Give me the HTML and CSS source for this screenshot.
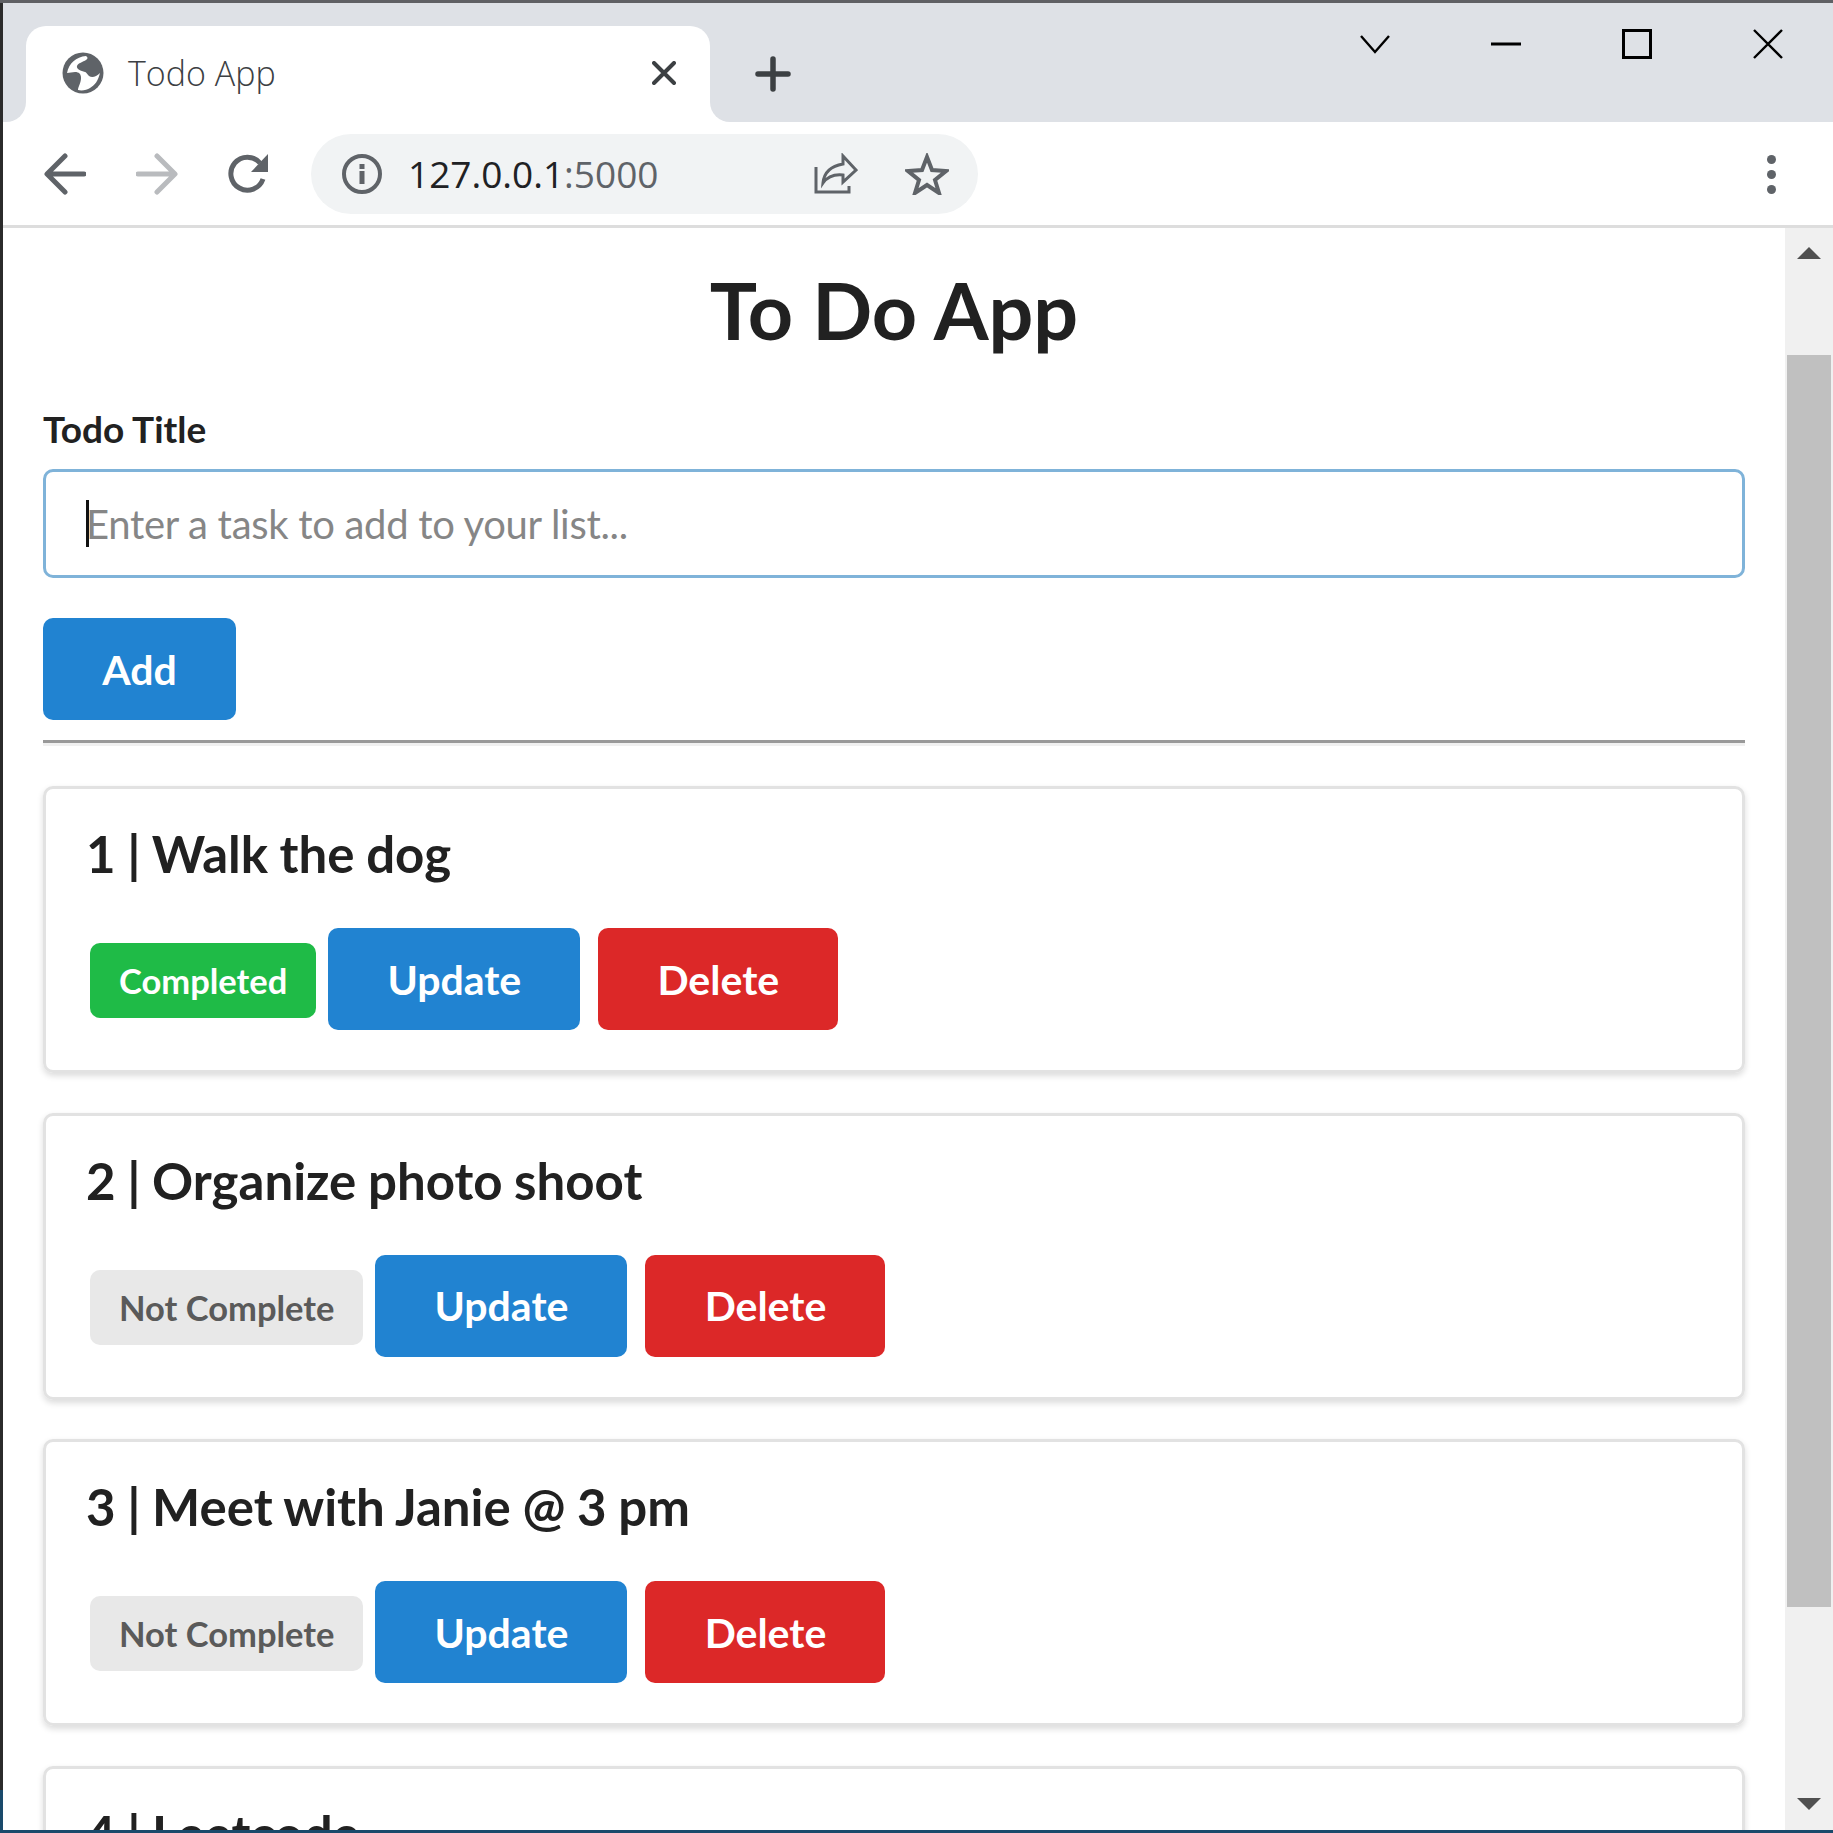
FILE: index.html
```html
<!DOCTYPE html>
<html lang="en">
	<head>
		<meta charset="utf-8">
		<title>Todo App</title>
		<link rel="stylesheet" href="styles.css">
	</head>
	<body>
		<div class="window">
			<div class="tabstrip">
				<div class="strip-start"></div>
				<div class="tab-slot">
					<div class="tab">
						<svg class="globe" width="42" height="42" viewBox="0 0 42 42">
							<circle cx="21" cy="21" r="20.5" fill="#5f6368"/>
							<path d="M24 4C14 5 7 11 5 21l8-1c4 0 6 2 6 6 0 5-3 9-3 12 4 1 9 0 12-2 5-3 8-7 10-15-4 4-8 5-11 3-2-2-3-4-4-4-4-1-9-3-8-6 1-3 6-4 9-6 2-1 2-3 0-4z" fill="#fff"/>
						</svg>
						<span class="tab-title">Todo App</span>
						<svg class="tab-close" width="24" height="24" viewBox="0 0 24 24">
							<path d="M2 2l20 20M22 2L2 22" stroke="#3c4043" stroke-width="4" stroke-linecap="round"/>
						</svg>
					</div>
				</div>
				<div class="strip-rest">
					<svg class="new-tab" width="36" height="36" viewBox="0 0 36 36">
						<path d="M18 3v30M3 18h30" stroke="#3c4043" stroke-width="5.500" stroke-linecap="round"/>
					</svg>
					<div class="window-controls">
						<svg width="30" height="30" viewBox="0 0 30 30">
							<path d="M1 7l14 16L29 7" fill="none" stroke="#000" stroke-width="2.4"/>
						</svg>
						<svg width="30" height="30" viewBox="0 0 30 30">
							<path d="M0 15h30" stroke="#000" stroke-width="3"/>
						</svg>
						<svg width="30" height="30" viewBox="0 0 30 30">
							<rect x="1.500" y="1.500" width="27" height="27" fill="none" stroke="#000" stroke-width="3"/>
						</svg>
						<svg width="30" height="30" viewBox="0 0 30 30">
							<path d="M1 1l28 28M29 1L1 29" stroke="#000" stroke-width="2.4"/>
						</svg>
					</div>
				</div>
			</div>
			<div class="toolbar">
				<svg class="nav-icon" width="42" height="42" viewBox="0 0 42 42">
					<path d="M40 21H4M21 3L3 21l18 18" fill="none" stroke="#5f6368" stroke-width="5" stroke-linecap="round" stroke-linejoin="round"/>
				</svg>
				<svg class="nav-icon nav-forward" width="42" height="42" viewBox="0 0 42 42">
					<path d="M2 21h36M21 3l18 18-18 18" fill="none" stroke="#b9bbbe" stroke-width="5" stroke-linecap="round" stroke-linejoin="round"/>
				</svg>
				<svg class="nav-icon nav-reload" width="42" height="42" viewBox="0 0 42 42">
					<path d="M36 26a16.500 16.500 0 1 1-3-16" fill="none" stroke="#5f6368" stroke-width="5"/>
					<path d="M41 1v18H24z" fill="#5f6368"/>
				</svg>
				<div class="omnibox">
					<svg class="info" width="40" height="40" viewBox="0 0 40 40">
						<circle cx="20" cy="20" r="18" fill="none" stroke="#5f6368" stroke-width="4"/>
						<path d="M17.500 10h5v5h-5zM17.500 17h5v13h-5z" fill="#5f6368"/>
					</svg>
					<span class="url">127.0.0.1<span class="url-port">:5000</span></span>
					<svg class="share" width="44" height="42" viewBox="0 0 44 42">
						<path d="M2 14v25h33v-6" fill="none" stroke="#5f6368" stroke-width="3"/>
						<path d="M29 3l13 14-13 12v-7c-9-1-15 1-20 8 1-10 8-17 20-19z" fill="none" stroke="#5f6368" stroke-width="3"/>
					</svg>
					<svg class="star" width="44" height="42" viewBox="0 0 44 42">
						<path d="M22 4l5 13 14 1-11 9 4 13-12-8-12 8 4-13L3 18l14-1z" fill="none" stroke="#5f6368" stroke-width="4"/>
					</svg>
				</div>
				<div class="menu-dots"><i></i><i></i><i></i></div>
			</div>
			<div class="viewport">
				<main class="page">
					<h1 class="page-title">To Do App</h1>
					<label class="field-label" for="title">Todo Title</label>
					<div class="field">
						<input class="field-input" id="title" type="text" placeholder="Enter a task to add to your list...">
						<span class="caret"></span>
					</div>
					<button class="btn btn-add">Add</button>
					<hr class="divider">

					<section class="card">
						<h2 class="card-title">1 | Walk the dog</h2>
						<div class="card-actions">
							<span class="badge badge-done">Completed</span>
							<button class="btn btn-update">Update</button>
							<button class="btn btn-delete">Delete</button>
						</div>
					</section>
					<section class="card">
						<h2 class="card-title">2 | Organize photo shoot</h2>
						<div class="card-actions">
							<span class="badge badge-open">Not Complete</span>
							<button class="btn btn-update">Update</button>
							<button class="btn btn-delete">Delete</button>
						</div>
					</section>
					<section class="card">
						<h2 class="card-title">3 | Meet with Janie @ 3 pm</h2>
						<div class="card-actions">
							<span class="badge badge-open">Not Complete</span>
							<button class="btn btn-update">Update</button>
							<button class="btn btn-delete">Delete</button>
						</div>
					</section>
					<section class="card">
						<h2 class="card-title">4 | Leetcode</h2>
					</section>
				</main>
				<div class="scrollbar">
					<span class="arrow-up"></span>
					<div class="thumb"></div>
					<span class="arrow-down"></span>
				</div>
			</div>
		</div>
	</body>
</html>
```

FILE: styles.css
```css
html, body {
	margin: 0;
	height: 100%;
	background: #fff;
}

.window {
	box-sizing: border-box;
	height: 1833px;
	display: flex;
	flex-direction: column;
	overflow: hidden;
	padding-left: 3px;
	border-top: 3px solid #5f6064;
	border-bottom: 3px solid #1a4a6b;
	background: linear-gradient(#2b2b2b 1787px, #1a4a6b 1787px) left top / 3px 100% no-repeat, #fff;
}

/* browser chrome */
.tabstrip {
	display: flex;
	height: 119px;
	flex: none;
}

.strip-start {
	width: 23px;
	background: #dee1e6;
	border-bottom-right-radius: 20px;
}

.tab-slot {
	width: 684px;
	padding-top: 23px;
	box-sizing: border-box;
	background: #dee1e6;
}

.tab {
	height: 96px;
	display: flex;
	align-items: center;
	background: #fff;
	border-radius: 20px 20px 0 0;
	padding: 0 22px 0 36px;
	box-sizing: border-box;
}

.globe {
	margin-right: 24px;
	margin-top: -2px;
}

.tab-title {
	flex: 1;
	font-family: "Open Sans", sans-serif;
	font-size: 34px;
	font-weight: 300;
	color: #3c4043;
	margin-top: -2px;
}

.tab-close {
	margin-top: -2px;
	margin-right: 12px;
}

.strip-rest {
	flex: 1;
	display: flex;
	background: #dee1e6;
	border-bottom-left-radius: 20px;
}

.new-tab {
	margin: 53px 0 0 45px;
}

.window-controls {
	margin-left: auto;
	margin-right: 50px;
	margin-top: 26px;
	display: flex;
	gap: 101px;
	align-items: flex-start;
}

.toolbar {
	height: 103px;
	flex: none;
	display: flex;
	align-items: center;
	padding: 0 0 0 41px;
	border-bottom: 3px solid #dddddd;
}

.nav-icon {
	margin-right: 50px;
}

.nav-forward {
	margin-right: 49px;
}

.nav-reload {
	margin-right: 42px;
}

.omnibox {
	width: 667px;
	height: 80px;
	flex: none;
	display: flex;
	align-items: center;
	box-sizing: border-box;
	padding-left: 31px;
	background: #f1f3f4;
	border-radius: 40px;
}

.url {
	flex: 1;
	margin-left: 26px;
	font-family: "Open Sans", sans-serif;
	font-size: 37px;
	color: #202124;
}

.url-port {
	color: #5f6368;
}

.share {
	margin-right: 47px;
}

.star {
	margin-right: 29px;
}

.menu-dots {
	margin-left: auto;
	margin-right: 57px;
	display: flex;
	flex-direction: column;
	gap: 6px;
	margin-top: 2px;
}

.menu-dots i {
	width: 9px;
	height: 9px;
	border-radius: 50%;
	background: #5f6368;
}

/* page */
.viewport {
	flex: 1;
	min-height: 0;
	display: flex;
}

.page {
	flex: 1;
	min-width: 0;
	overflow: hidden;
	padding: 0 40px;
	font-family: "Lato", sans-serif;
	color: #212121;
}

.page-title {
	margin: 42px 0 0;
	text-align: center;
	font-size: 79px;
	line-height: 80px;
	font-weight: 700;
}

.field-label {
	display: block;
	margin-top: 57px;
	font-size: 37px;
	line-height: 44px;
	font-weight: 700;
}

.field {
	position: relative;
	margin-top: 18px;
}

.field-input {
	display: block;
	width: 100%;
	height: 109px;
	box-sizing: border-box;
	padding: 0 40px;
	border: 3px solid #7fb3d9;
	border-radius: 10px;
	outline: none;
	font-family: "Lato", sans-serif;
	font-size: 40px;
	letter-spacing: -0.3px;
}

.field-input::placeholder {
	color: #868686;
}

.caret {
	position: absolute;
	left: 43px;
	top: 31px;
	width: 3px;
	height: 47px;
	background: #111;
}

.btn {
	height: 102px;
	padding: 0;
	border: none;
	border-radius: 10px;
	color: #fff;
	font-family: "Lato", sans-serif;
	font-size: 41px;
	font-weight: 700;
}

.btn-add {
	display: block;
	width: 193px;
	margin-top: 40px;
	background: #2183d1;
}

.divider {
	margin: 20px 0 40px;
	border: none;
	border-top: 3px solid #999;
	border-bottom: 3px solid #f0f0f0;
}

.card {
	box-sizing: border-box;
	height: 287px;
	margin-bottom: 39.5px;
	padding: 34px 40px;
	border: 3px solid #e2e2e2;
	border-radius: 10px;
	box-shadow: 0 3px 6px rgba(0, 0, 0, 0.14);
}

.card-title {
	margin: 0;
	font-size: 51px;
	line-height: 62px;
	font-weight: 700;
	word-spacing: -0.8px;
}

.card-actions {
	display: flex;
	align-items: center;
	margin-top: 43px;
	padding-left: 4px;
}

.badge {
	height: 75px;
	display: flex;
	align-items: center;
	padding: 0 29px;
	margin-top: 3px;
	margin-right: 12px;
	border-radius: 10px;
	font-size: 34.5px;
	font-weight: 700;
}

.badge-done {
	background: #1fbb47;
	color: #fff;
}

.badge-open {
	background: #e8e8e8;
	color: #5a5a5a;
}

.btn-update {
	width: 252px;
	background: #2183d1;
	margin-right: 18px;
}

.btn-delete {
	width: 240px;
	background: #dc2828;
}

.scrollbar {
	width: 48px;
	flex: none;
	display: flex;
	flex-direction: column;
	align-items: center;
	background: #f0f0f0;
}

.arrow-up {
	margin-top: 19px;
	border: 12px solid transparent;
	border-top: none;
	border-bottom: 12px solid #505050;
}

.thumb {
	width: 44px;
	height: 1252px;
	margin-top: 96px;
	background: #c0c0c0;
}

.arrow-down {
	margin-top: 191px;
	border: 12px solid transparent;
	border-bottom: none;
	border-top: 12px solid #505050;
}
```
